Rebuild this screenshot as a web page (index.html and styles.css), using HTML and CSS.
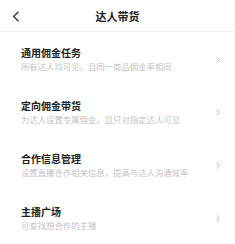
FILE: index.html
```html
<!DOCTYPE html>
<html>
<head>
  <meta charset="UTF-8">
  <title>达人带货</title>
  <link rel="stylesheet" href="styles.css">
</head>
<body>
  <div class="page">
    <div class="nav-bar">
      <span class="back">
        <svg width="8" height="11" viewBox="0 0 8 11"><polyline points="6.5,0.8 1.6,5.5 6.5,10.2" fill="none" stroke="#333" stroke-width="1.3"/></svg>
      </span>
      <h1 class="nav-title">达人带货</h1>
    </div>

    <div class="menu-list">
      <div class="menu-item">
        <div class="menu-text">
          <div class="menu-title">通用佣金任务</div>
          <div class="menu-desc">所有达人均可见，且同一商品佣金率相同</div>
        </div>
        <svg class="arrow" width="4" height="7" viewBox="0 0 4 7"><polyline points="0.6,0.6 3.3,3.5 0.6,6.4" fill="none" stroke="#b0b0b0" stroke-width="0.9"/></svg>
      </div>
      <div class="menu-item">
        <div class="menu-text">
          <div class="menu-title">定向佣金带货</div>
          <div class="menu-desc">为达人设置专属佣金，且只对指定达人可见</div>
        </div>
        <svg class="arrow" width="4" height="7" viewBox="0 0 4 7"><polyline points="0.6,0.6 3.3,3.5 0.6,6.4" fill="none" stroke="#b0b0b0" stroke-width="0.9"/></svg>
      </div>
      <div class="menu-item">
        <div class="menu-text">
          <div class="menu-title">合作信息管理</div>
          <div class="menu-desc">设置直播合作相关信息，提高与达人沟通效率</div>
        </div>
        <svg class="arrow" width="4" height="7" viewBox="0 0 4 7"><polyline points="0.6,0.6 3.3,3.5 0.6,6.4" fill="none" stroke="#b0b0b0" stroke-width="0.9"/></svg>
      </div>
      <div class="menu-item">
        <div class="menu-text">
          <div class="menu-title">主播广场</div>
          <div class="menu-desc">可查找想合作的主播</div>
        </div>
        <svg class="arrow" width="4" height="7" viewBox="0 0 4 7"><polyline points="0.6,0.6 3.3,3.5 0.6,6.4" fill="none" stroke="#b0b0b0" stroke-width="0.9"/></svg>
      </div>
    </div>
  </div>
</body>
</html>
```

FILE: styles.css
```css
:root {
  --text: #222222;
  --text-secondary: #c4c4c4;
  --border: #f3f3f3;
}

body {
  margin: 0;
  padding: 0;
  background-color: #ffffff;
  color: var(--text);
  font-family: "Noto Sans CJK SC", "Noto Sans", sans-serif;
}

.page {
  width: 235px;
}

.nav-bar {
  height: 31px;
  display: flex;
  align-items: center;
  justify-content: center;
  position: relative;
  border-bottom: 1px solid var(--border);
}

.back {
  position: absolute;
  left: 12px;
  top: 11px;
  display: flex;
}

.nav-title {
  margin: 0;
  font-size: 11px;
  font-weight: 600;
  line-height: 14px;
}

.menu-item {
  display: flex;
  align-items: center;
  padding: 14px 15px 13px 21px;
}

.menu-text {
  flex: 1;
}

.menu-title {
  font-size: 10px;
  font-weight: 600;
  line-height: 14px;
}

.menu-desc {
  font-size: 8.4px;
  line-height: 12px;
  color: var(--text-secondary);
}

.arrow {
  display: block;
}
```
